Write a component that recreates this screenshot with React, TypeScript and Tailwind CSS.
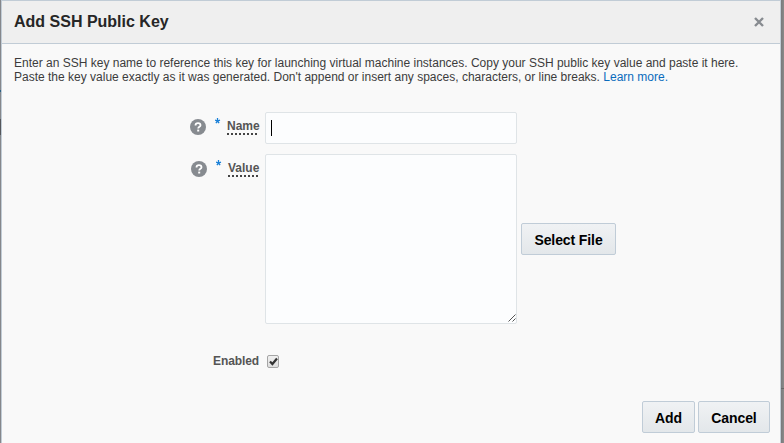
import React from "react";

function HelpIcon() {
  return (
    <svg width="16" height="16" viewBox="0 0 16 16" className="block shrink-0">
      <circle cx="8" cy="8" r="8" fill="#878b90" />
      <path d="M5.5 6.4C5.5 4.9 6.6 4.2 8 4.2s2.5.8 2.5 2c0 1.6-2.3 1.6-2.3 3.3" fill="none" stroke="#fff" strokeWidth="1.8" />
      <rect x="7.2" y="10.6" width="2" height="1.9" fill="#fff" />
    </svg>
  );
}

function Asterisk() {
  return (
    <svg width="6" height="6" viewBox="0 0 6 6" className="block shrink-0">
      <path d="M2.5 0v3M0 2.1 2.5 3l2.5-.9M.9 5.2 2.5 3l1.6 2.2" fill="none" stroke="#1a80d8" strokeWidth="1.3" />
    </svg>
  );
}

function FieldLabel({ text, className, gap, width }: { text: string; className: string; gap: string; width: string }) {
  return (
    <div className={`flex shrink-0 items-start justify-end ${className}`}>
      <div className="pt-[7px]">
        <HelpIcon />
      </div>
      <div className={`pt-[6px] pl-[9px] ${gap}`}>
        <Asterisk />
      </div>
      <div className={`mt-[6px] h-[17px] pt-px text-[12px] leading-[14px] font-bold whitespace-nowrap text-[#555] ${width}`}>
        {text}
        <svg width="32" height="2" className="block">
          <path d="M0 1h32" stroke="#444" strokeWidth="2" strokeDasharray="2 2" />
        </svg>
      </div>
    </div>
  );
}

function Button({ children, className }: { children: React.ReactNode; className: string }) {
  return (
    <button
      className={`h-8 shrink-0 rounded-[2px] border border-[#c0ccd7] bg-linear-to-b from-[#f0f2f4] to-[#e3e7ea] pt-[2px] text-center text-[14px] leading-4 font-bold tracking-[-0.1px] whitespace-nowrap text-black ${className}`}
    >
      {children}
    </button>
  );
}

export default function App() {
  return (
    <div className="flex h-[443px] w-[784px] overflow-hidden bg-[#f9f9f9] font-['Liberation_Sans',Arial,sans-serif]">
      <div className="flex w-px flex-col bg-[#85878b]">
        <div className="mt-[90px] h-[2px] bg-[#2b6184]" />
        <div className="mt-[27px] h-4 bg-[#55575b]" />
      </div>
      <main className="flex w-[780px] flex-col border-x border-t border-[#c1ccd6] bg-[#f9f9f9]">
        <header className="flex h-[43px] items-center justify-between border-b border-[#c1ccd6] bg-[#efefef] pr-[16px] pl-[12px]">
          <h1 className="text-[16px] leading-5 font-bold whitespace-nowrap text-[#262626]">Add SSH Public Key</h1>
          <svg width="10" height="10" viewBox="0 0 10 10" className="block">
            <path d="m1 1 8 8M9 1 1 9" stroke="#878b90" strokeWidth="2.4" />
          </svg>
        </header>
        <div className="h-[68px] pt-[12px] pl-[12px] text-[12px] leading-[14px] whitespace-nowrap text-[#3c3c3c]">
          <p>
            Enter an SSH key name to reference this key for launching virtual machine instances. Copy your SSH public key value and paste it here.
          </p>
          <p>
            Paste the key value exactly as it was generated. Don't append or insert any spaces, characters, or line breaks.{" "}
            <a className="text-[#0a6cbd]">Learn more.</a>
          </p>
        </div>
        <div className="flex h-8">
          <FieldLabel text="Name" className="w-[257px]" gap="pr-[6px]" width="w-8" />
          <div className="ml-[6px] flex w-[252px] items-center rounded-[2px] border border-[#dfe4e7] bg-[#fcfdfe] pl-[5px]">
            <div className="h-4 w-px bg-black" />
          </div>
        </div>
        <div className="mt-[10px] flex h-[170px]">
          <FieldLabel text="Value" className="w-[257px]" gap="pr-[6px]" width="w-[31px]" />
          <div className="ml-[6px] flex w-[252px] items-end justify-end rounded-[2px] border border-[#dfe4e7] bg-[#fcfdfe] pb-px">
            <svg width="8" height="8" viewBox="0 0 8 8" className="block">
              <path d="M.5 7.5l7-7M4.5 7.5l3-3" stroke="#555" strokeWidth="1" />
            </svg>
          </div>
          <Button className="mt-[69px] ml-1 w-[95px]">Select File</Button>
        </div>
        <div className="mt-[29px] flex h-4 items-center">
          <div className="w-[257px] text-right text-[12px] leading-4 font-bold tracking-[-0.1px] text-[#555]">Enabled</div>
          <div className="ml-2 flex h-[13px] w-3 items-center justify-center rounded-[2px] border border-[#a5a5a5] bg-linear-to-b from-[#f0f0f0] to-[#dedede]">
            <svg width="9" height="9" viewBox="0 0 9 9" className="block">
              <path d="M1 4.5 3.4 7 8 1.5" fill="none" stroke="#333" strokeWidth="2.2" />
            </svg>
          </div>
        </div>
        <div className="mt-8 flex justify-end gap-[3px] pr-[10px]">
          <Button className="w-[53px]">Add</Button>
          <Button className="w-[72px]">Cancel</Button>
        </div>
      </main>
      <div className="flex w-[3px] flex-col bg-linear-to-r from-[#77797b] to-[#8b8b8b]">
        <div className="mt-[388px] h-px bg-[#666]" />
      </div>
    </div>
  );
}
